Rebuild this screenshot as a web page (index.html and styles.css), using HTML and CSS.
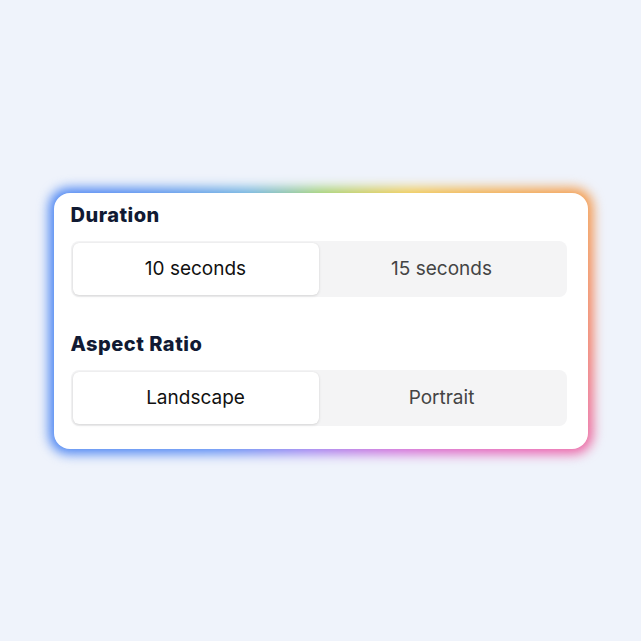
FILE: index.html
```html
<!DOCTYPE html>
<html>
<head>
<meta charset="utf-8">
<link rel="stylesheet" href="styles.css">
</head>
<body>
<div class="card">
  <div class="section">
    <h2 class="label">Duration</h2>
    <div class="seg">
      <button class="opt active">10 seconds</button>
      <button class="opt">15 seconds</button>
    </div>
  </div>
  <div class="section">
    <h2 class="label">Aspect Ratio</h2>
    <div class="seg">
      <button class="opt active">Landscape</button>
      <button class="opt">Portrait</button>
    </div>
  </div>
</div>
</body>
</html>
```
FILE: styles.css
```css
html, body { margin: 0; padding: 0; }
body {
  background: #eff3fb;
  min-height: 100vh;
  display: flex;
  align-items: center;
  justify-content: center;
  font-family: Inter, "Noto Sans", sans-serif;
}
.card {
  position: relative;
  width: 534px;
  box-sizing: border-box;
  padding: 10px 21px 23px 17px;
  background: #ffffff;
  border-radius: 16px;
  isolation: isolate;
}
.card::before {
  content: "";
  position: absolute;
  inset: -5px;
  border-radius: 20px;
  background: conic-gradient(from 0deg at 50% 50%, #9ccf68 0deg, #f0c848 35deg, #f49a48 64deg, #f27a64 95deg, #ea60b0 120deg, #d068d8 148deg, #9c7cf0 185deg, #5a8cf4 220deg, #4a84f2 250deg, #4a84f2 300deg, #66aedc 330deg, #9ccf68 360deg);
  filter: blur(6px);
  z-index: -2;
}
.card::after {
  content: "";
  position: absolute;
  inset: 0;
  border-radius: 16px;
  background: #ffffff;
  z-index: -1;
}
.section + .section { margin-top: 35px; }
.label {
  margin: 0 0 14px 0;
  font-family: Inter, sans-serif;
  font-weight: 800;
  font-size: 20px;
  line-height: 24px;
  color: #111a33;
  letter-spacing: 0.5px;
}
.seg {
  display: flex;
  padding: 2px;
  background: #f4f4f5;
  border-radius: 8px;
}
.opt {
  flex: 1;
  height: 52px;
  border: none;
  background: transparent;
  border-radius: 6px;
  font-family: Inter, sans-serif;
  font-size: 19px;
  color: #444;
  padding: 0;
}
.opt.active {
  background: #ffffff;
  color: #111;
  box-shadow: 0 1px 3px rgba(0,0,0,0.12), 0 0 1px rgba(0,0,0,0.08);
}
```
